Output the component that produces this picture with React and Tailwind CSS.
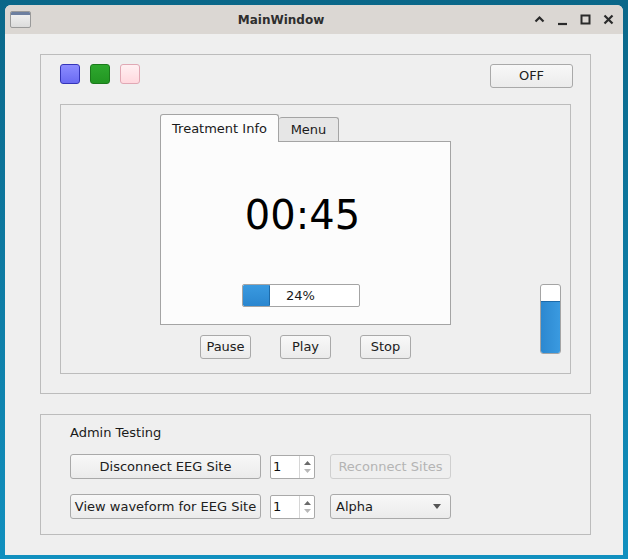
import React from 'react';

const font = { fontFamily: '"DejaVu Sans", "Liberation Sans", sans-serif' };

const Btn = ({ children, className = '' }) => (
  <div
    className={`flex items-center justify-center rounded-[3px] border border-[#a9a9a9] bg-gradient-to-b from-[#f8f8f8] to-[#ebebeb] text-[13px] text-[#202020] ${className}`}
  >
    {children}
  </div>
);

const SpinBox = () => (
  <div className="flex h-[24px] w-[45px] items-stretch rounded-[2px] border border-[#a9a9a9] bg-white">
    <div className="flex flex-1 items-center pl-[2px] text-[13px] text-[#101010]">1</div>
    <div className="flex w-[15px] flex-col items-center justify-center gap-[4px] border-l border-[#d6d6d6]">
      <svg width="7" height="4" viewBox="0 0 7 4">
        <path d="M0 4 L3.5 0 L7 4 Z" fill="#6a6a6a" />
      </svg>
      <svg width="7" height="4" viewBox="0 0 7 4">
        <path d="M0 0 L3.5 4 L7 0 Z" fill="#b8b8b8" />
      </svg>
    </div>
  </div>
);

const TitleBar = () => (
  <div className="flex h-[29px] items-center rounded-t-[6px] bg-[#dbd7d3] pl-[5px] pr-[8px]">
    <div className="relative h-[17px] w-[21px] overflow-hidden rounded-[2px] border border-[#9a9a9a] bg-gradient-to-b from-[#f4f4f4] to-[#dcdcdc]">
      <div className="h-[3px] bg-[#6d7fa0]" />
    </div>
    <div className="flex-1 pr-[2px] pt-[1px] text-center text-[12px] font-bold text-[#2e2e2e]">MainWindow</div>
    <div className="flex items-center gap-[10px]">
      <svg width="13" height="13" viewBox="0 0 13 13">
        <path d="M2.5 8.5 L6.5 4.5 L10.5 8.5" stroke="#2a2a2a" strokeWidth="2.2" fill="none" />
      </svg>
      <svg width="13" height="13" viewBox="0 0 13 13">
        <path d="M2 11 H11" stroke="#2a2a2a" strokeWidth="2.2" />
      </svg>
      <svg width="13" height="13" viewBox="0 0 13 13">
        <rect x="2.5" y="2.5" width="8" height="8" stroke="#2a2a2a" strokeWidth="2" fill="none" />
      </svg>
      <svg width="13" height="13" viewBox="0 0 13 13">
        <path d="M2.5 2.5 L10.5 10.5 M10.5 2.5 L2.5 10.5" stroke="#2a2a2a" strokeWidth="2.2" />
      </svg>
    </div>
  </div>
);

const TreatmentTabs = () => (
  <div className="flex flex-col">
    <div className="flex items-end">
      <div className="relative -mb-px flex h-[28px] w-[119px] items-center justify-center rounded-t-[3px] border border-b-0 border-[#a4a4a4] bg-[#fcfcfc] text-[13px] text-[#1a1a1a]">
        Treatment Info
      </div>
      <div className="flex h-[24px] w-[60px] items-center justify-center rounded-t-[3px] border border-b-0 border-l-0 border-[#a4a4a4] bg-[#e6e6e6] text-[13px] text-[#1a1a1a]">
        Menu
      </div>
    </div>
    <div className="flex h-[184px] w-[291px] flex-col items-center border border-[#a4a4a4] bg-[#fcfcfc] pr-[8px]">
      <div className="mt-[46px] pl-[2px] text-[40px] leading-[54px] text-black">00:45</div>
      <div className="mr-[2px] mt-[42px] flex h-[23px] w-[118px] overflow-hidden rounded-[2px] border border-[#a4a4a4] bg-white">
        <div className="w-[27px] rounded-[1px] border-r border-[#1d6aa8] bg-gradient-to-b from-[#3a9ae0] to-[#2a86cf]" />
        <div className="flex flex-1 items-center justify-center pr-[27px] text-[13px] text-[#1a1a1a]">24%</div>
      </div>
    </div>
  </div>
);

export default function App() {
  return (
    <div
      className="h-[559px] w-[628px] overflow-hidden bg-gradient-to-b from-[#0a6789] to-[#1190bf] pl-[5px] pt-[5px]"
      style={font}
    >
      <div className="flex h-[550px] w-[618px] flex-col rounded-t-[6px] bg-[#efefef]">
        <TitleBar />
        <div className="flex flex-1 flex-col gap-[20px] px-[35px] pt-[20px]">
          {/* top group */}
          <div className="flex h-[340px] w-[551px] flex-col border border-[#bcbcbc] px-[19px] pt-[9px]">
            <div className="flex h-[24px] items-start">
              <div className="flex gap-[10px]">
                <div className="h-[20px] w-[20px] rounded-[3px] border border-[#3434b8] bg-gradient-to-b from-[#8c8cff] to-[#6a6af2]" />
                <div className="h-[20px] w-[20px] rounded-[3px] border border-[#1c7a1c] bg-gradient-to-b from-[#2ea82e] to-[#229622]" />
                <div className="h-[20px] w-[20px] rounded-[3px] border border-[#e0a8b4] bg-gradient-to-b from-[#fff0f2] to-[#ffd8de]" />
              </div>
              <Btn className="-mr-[2px] ml-auto h-[24px] w-[83px]">OFF</Btn>
            </div>
            <div className="mt-[16px] flex h-[270px] border border-[#bcbcbc]">
              <div className="flex flex-col pl-[99px] pt-[9px]">
                <TreatmentTabs />
                <div className="ml-[40px] mt-[10px] flex gap-[29px]">
                  <Btn className="h-[24px] w-[51px]">Pause</Btn>
                  <Btn className="h-[24px] w-[51px]">Play</Btn>
                  <Btn className="h-[24px] w-[51px]">Stop</Btn>
                </div>
              </div>
              <div className="mb-[19px] ml-auto mr-[9px] flex h-[70px] w-[21px] flex-col self-end overflow-hidden rounded-[3px] border border-[#a4a4a4] bg-white">
                <div className="h-[16px]" />
                <div className="flex-1 border-t border-[#1d6aa8] bg-gradient-to-r from-[#2c88d0] to-[#3a9ae0]" />
              </div>
            </div>
          </div>

          {/* admin group */}
          <div className="flex h-[121px] w-[551px] flex-col border border-[#bcbcbc] pl-[29px] pt-[10px]">
            <div className="h-[16px] text-[13px] leading-[16px] text-[#1a1a1a]">Admin Testing</div>
            <div className="mt-[13px] flex items-center">
              <Btn className="h-[25px] w-[191px]">Disconnect EEG Site</Btn>
              <div className="ml-[9px]">
                <SpinBox />
              </div>
              <div className="ml-[15px] flex h-[25px] w-[121px] items-center justify-center rounded-[3px] border border-[#cfcfcf] bg-[#efefef] text-[13px] text-[#b4b4b4]">
                Reconnect Sites
              </div>
            </div>
            <div className="mt-[15px] flex items-center">
              <Btn className="h-[25px] w-[191px]">View waveform for EEG Site</Btn>
              <div className="ml-[9px]">
                <SpinBox />
              </div>
              <div className="ml-[15px] flex h-[25px] w-[121px] items-center rounded-[3px] border border-[#a9a9a9] bg-gradient-to-b from-[#f8f8f8] to-[#ebebeb] pl-[5px] pr-[9px] text-[13px] text-[#1a1a1a]">
                <span className="flex-1">Alpha</span>
                <svg width="8" height="5" viewBox="0 0 8 5">
                  <path d="M0 0 L4 5 L8 0 Z" fill="#555" />
                </svg>
              </div>
            </div>
          </div>
        </div>
      </div>
    </div>
  );
}
